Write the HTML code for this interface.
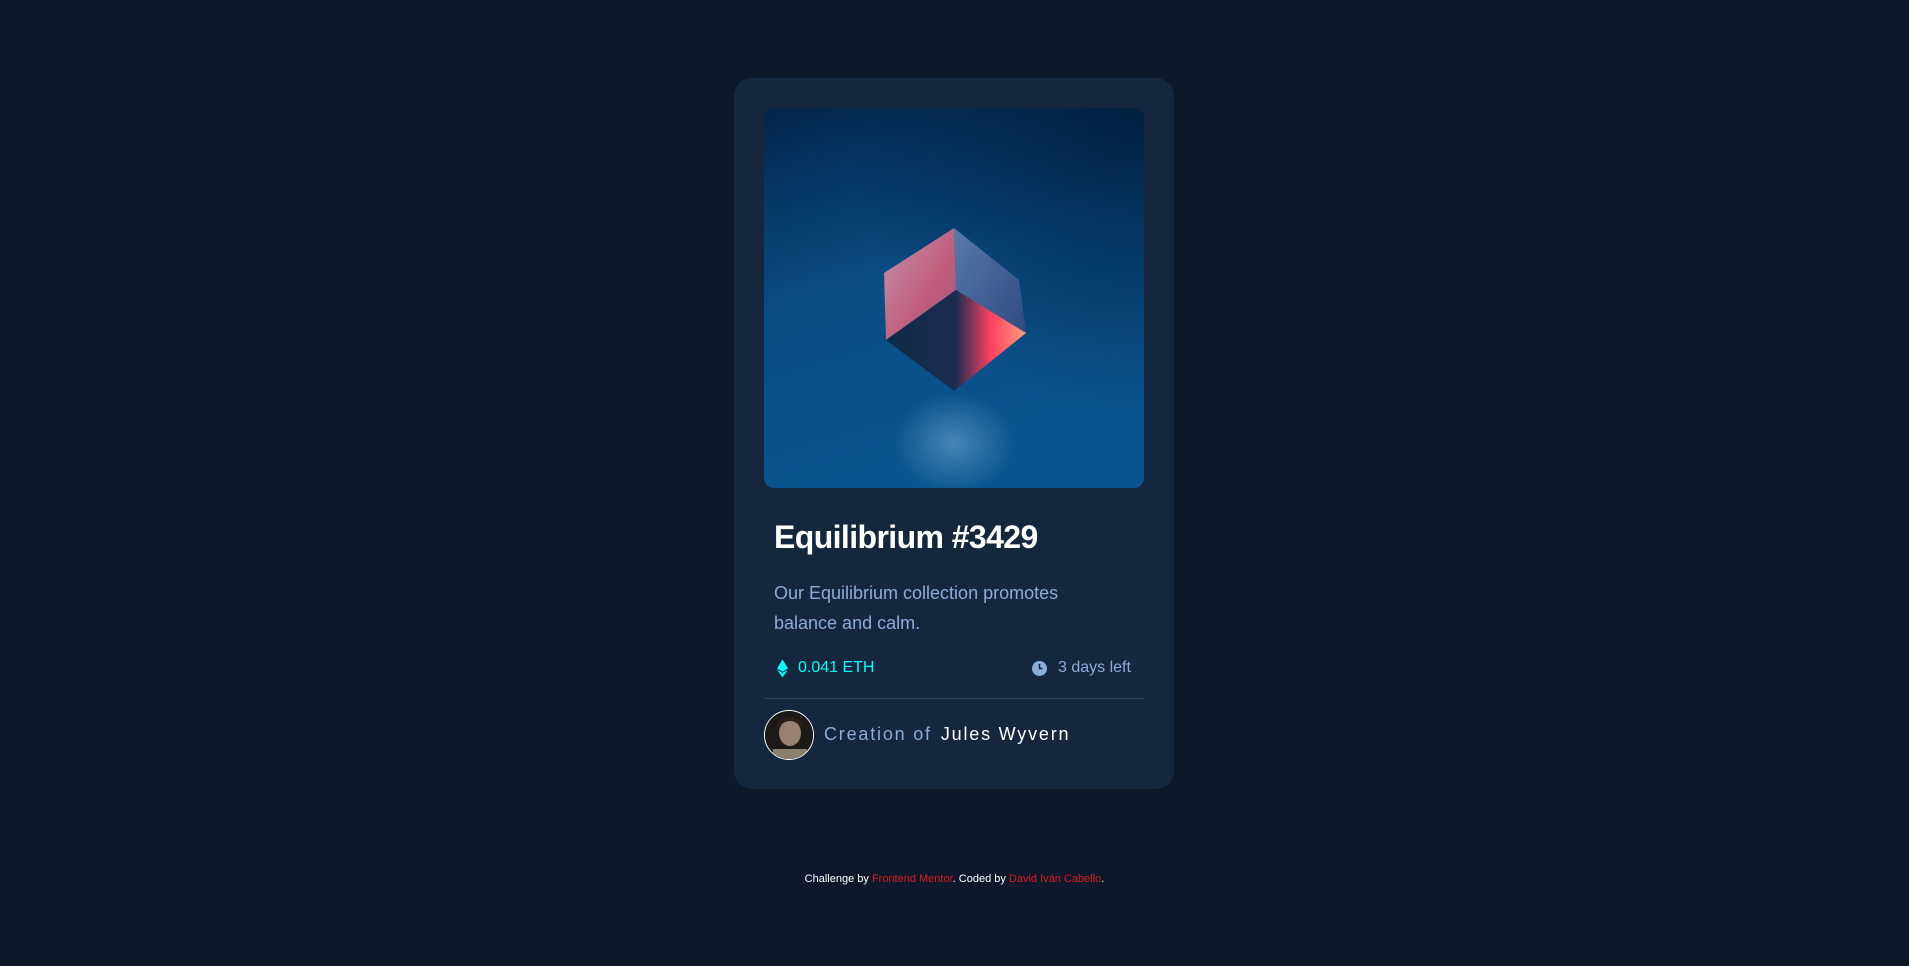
<!DOCTYPE html>
<html><head><meta charset="utf-8"><style>
*{margin:0;padding:0;box-sizing:border-box}
html,body{width:1909px;height:966px;background:#0d192b;font-family:"Liberation Sans",sans-serif;overflow:hidden;position:relative}
.card{position:absolute;left:734px;top:78px;width:440px;height:711px;background:#15263f;border-radius:18px}
.img{position:absolute;left:30px;top:30px;width:380px;height:380px;border-radius:10px;overflow:hidden}
h1{position:absolute;left:40px;top:441px;color:#fff;font-size:32px;font-weight:bold;letter-spacing:-0.6px}
p.d{position:absolute;left:40px;top:500px;width:320px;color:#8bacd9;font-size:18px;line-height:30px}
.eth{position:absolute;left:64px;top:581px;color:#00fff8;font-size:16px}
.days{position:absolute;left:324px;top:581px;color:#8bacd9;font-size:16px}
.hr{position:absolute;left:30px;top:620px;width:380px;height:1px;background:#2e405a}
.av{position:absolute;left:30px;top:632px;width:50px;height:50px;border-radius:50%;border:1.5px solid #fff;overflow:hidden;background:#2a2420}
.cr{position:absolute;left:90px;top:646px;font-size:18px;letter-spacing:1.8px;color:#8bacd9}
.cr b{color:#fff;font-weight:normal;margin-left:9px}
.ft{position:absolute;left:0;width:1909px;top:873px;text-align:center;color:#fff;font-size:11px}
.ft span{color:#e0191f}
</style></head><body>
<div class="card">
<div class="img"><svg width="380" height="380" viewBox="0 0 380 380">
<defs>
<linearGradient id="bg" x1="0" y1="0" x2="0.3" y2="1"><stop offset="0" stop-color="#03254a"/><stop offset="0.5" stop-color="#0a4d85"/><stop offset="1" stop-color="#0a5590"/></linearGradient>
<radialGradient id="tr" cx="1" cy="0" r="0.8"><stop offset="0" stop-color="#001a36" stop-opacity="0.8"/><stop offset="1" stop-color="#001a36" stop-opacity="0"/></radialGradient>
<linearGradient id="lf" x1="0" y1="0" x2="1" y2="1"><stop offset="0" stop-color="#e8a0b8"/><stop offset="0.6" stop-color="#e0607a"/><stop offset="1" stop-color="#c05a80"/></linearGradient>
<linearGradient id="rf" x1="0" y1="0" x2="1" y2="1"><stop offset="0" stop-color="#6a8ab8"/><stop offset="1" stop-color="#3a4a80"/></linearGradient>
<linearGradient id="bt" x1="0" y1="0" x2="1" y2="0"><stop offset="0" stop-color="#0e2a48"/><stop offset="0.5" stop-color="#1a2c50"/><stop offset="0.75" stop-color="#ff4060"/><stop offset="1" stop-color="#ffa080"/></linearGradient>
<radialGradient id="rl" cx="0.5" cy="0.5" r="0.5"><stop offset="0" stop-color="#7fb8e0" stop-opacity="0.5"/><stop offset="1" stop-color="#7fb8e0" stop-opacity="0"/></radialGradient>
</defs>
<rect width="380" height="380" fill="url(#bg)"/>
<rect width="380" height="380" fill="url(#tr)"/>
<ellipse cx="190" cy="335" rx="60" ry="50" fill="url(#rl)"/>
<polygon points="190,120 120,165 122,232 192,182" fill="url(#lf)" opacity="0.85"/>
<polygon points="190,120 255,172 262,225 192,182" fill="url(#rf)" opacity="0.8"/>
<polygon points="122,232 192,182 262,225 190,283" fill="url(#bt)"/>
</svg></div>
<h1>Equilibrium #3429</h1>
<p class="d">Our Equilibrium collection promotes balance and calm.</p>
<svg style="position:absolute;left:43px;top:581px" width="11" height="19" viewBox="0 0 11 18"><path d="M5.5 0L0 9l5.5 3.2L11 9z" fill="#00fff8"/><path d="M5.5 13.4L0 10.2 5.5 18l5.5-7.8z" fill="#00fff8"/></svg>
<div class="eth">0.041 ETH</div>
<svg style="position:absolute;left:298px;top:583px" width="15" height="15" viewBox="0 0 15 15"><circle cx="7.5" cy="7.5" r="7.5" fill="#8bacd9"/><path d="M7.5 3v4.5h3" stroke="#15263f" stroke-width="1.6" fill="none"/></svg>
<div class="days" style="left:324px">3 days left</div>
<div class="hr"></div>
<div class="av"><svg width="50" height="50"><rect width="50" height="50" fill="#1c1a18"/><ellipse cx="25" cy="22" rx="11" ry="13" fill="#9a8070"/><path d="M12 18q13-16 26 0v-6q-13-12-26 0z" fill="#2a1e18"/><rect x="8" y="38" width="34" height="14" fill="#8a8070"/></svg></div>
<div class="cr">Creation of<b>Jules Wyvern</b></div>
</div>
<div class="ft">Challenge by <span>Frontend Mentor</span>. Coded by <span>David Iván Cabello</span>.</div>
</body></html>
